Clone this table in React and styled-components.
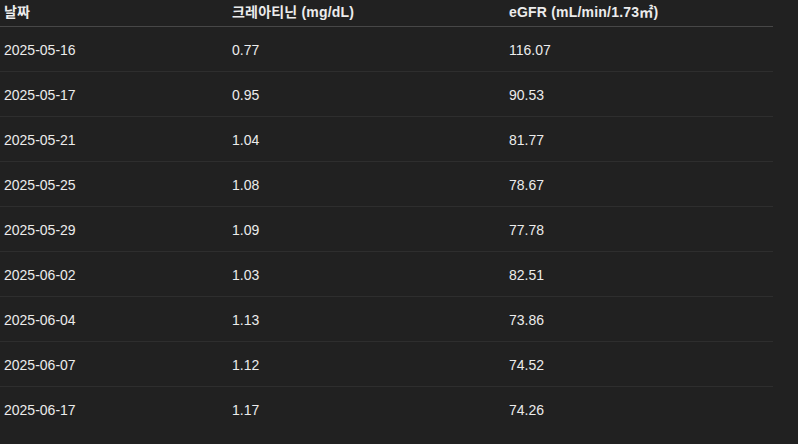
import React from 'react'
import styled, { createGlobalStyle } from 'styled-components'

const rows = [
    ['2025-05-16', '0.77', '116.07'],
    ['2025-05-17', '0.95', '90.53'],
    ['2025-05-21', '1.04', '81.77'],
    ['2025-05-25', '1.08', '78.67'],
    ['2025-05-29', '1.09', '77.78'],
    ['2025-06-02', '1.03', '82.51'],
    ['2025-06-04', '1.13', '73.86'],
    ['2025-06-07', '1.12', '74.52'],
    ['2025-06-17', '1.17', '74.26'],
]

const App = () => (
    <>
        <Global />
        <Page>
            <Table>
                <colgroup>
                    <col style={{ width: 228 }} />
                    <col style={{ width: 277 }} />
                    <col />
                </colgroup>
                <thead>
                    <tr>
                        <Th>날짜</Th>
                        <Th>크레아티닌 (mg/dL)</Th>
                        <Th>eGFR (mL/min/1.73㎡)</Th>
                    </tr>
                </thead>
                <tbody>
                    {rows.map((r, i) => (
                        <Row key={r[0]} last={i === rows.length - 1}>
                            {r.map((c, j) => <Td key={j}>{c}</Td>)}
                        </Row>
                    ))}
                </tbody>
            </Table>
        </Page>
    </>
)

export default App


//css
const Global = createGlobalStyle`
    html, body {
        margin: 0;
        background: #212121;
    }
`

const Page = styled.div`
    width: 798px;
    height: 444px;
    background: #212121;
    color: #ececec;
    font-family: "Liberation Sans", "Noto Sans CJK KR", sans-serif;
    font-size: 14px;
    overflow: hidden;
`

const Table = styled.table`
    width: 773px;
    border-collapse: collapse;
    table-layout: fixed;
`

const Th = styled.th`
    text-align: left;
    font-weight: 700;
    padding: 0 4px;
    height: 26px;
    vertical-align: top;
    line-height: 24px;
    letter-spacing: 0.2px;
    border-bottom: 1px solid #474747;
`

const Row = styled.tr`
    border-bottom: ${p => (p.last ? 'none' : '1px solid #2e2e2e')};
`

const Td = styled.td`
    padding: 2px 4px 0;
    height: 42px;
    line-height: 20px;
    vertical-align: middle;
`
